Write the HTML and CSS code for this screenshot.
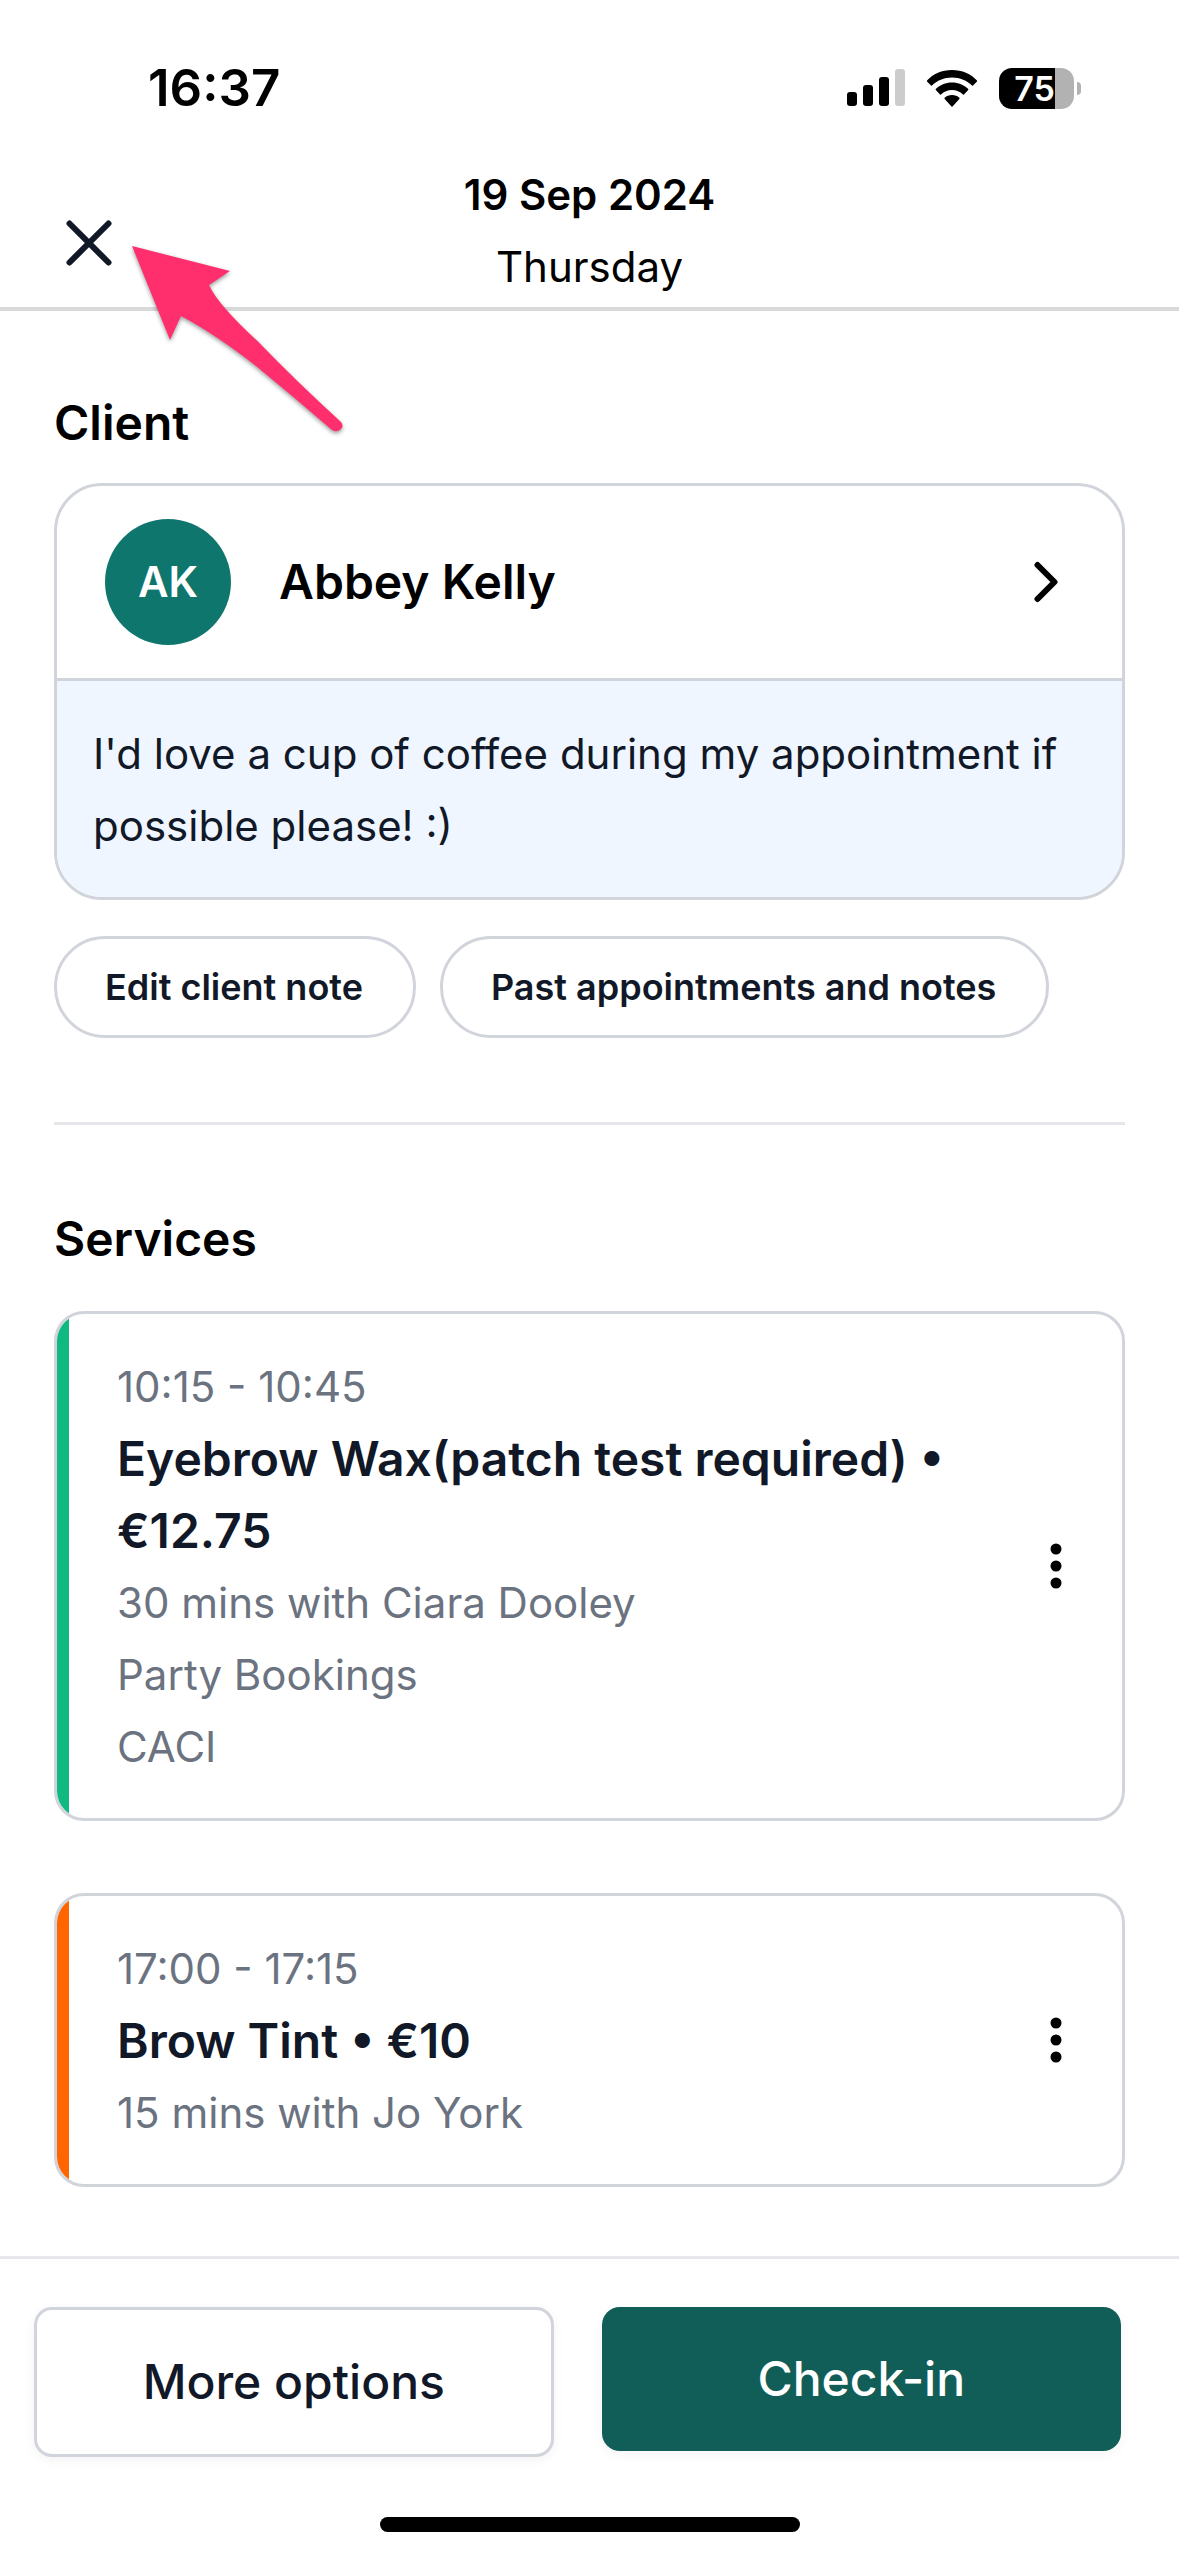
FILE: index.html
```html
<!DOCTYPE html>
<html lang="en">
  <head>
    <meta charset="utf-8" />
    <meta name="viewport" content="width=device-width, initial-scale=1.0" />
    <title>Appointment</title>
    <link rel="stylesheet" href="styles.css">
  </head>
  <body>
    <div class="status">
      <span class="status-time">16:37</span>
      <div class="status-icons">
        <svg class="signal" width="58" height="38" viewBox="0 0 58 38">
          <rect x="0" y="23" width="10" height="14" rx="3" />
          <rect x="16" y="16" width="10" height="21" rx="3" />
          <rect x="32" y="8" width="10" height="29" rx="3" />
          <rect x="48" y="0" width="10" height="37" rx="3" fill="#ccc" />
        </svg>
        <svg class="wifi" width="50" height="37" viewBox="0 0 50 37">
          <path d="M25 0C35 0 44 4 50 10.500Q50.500 11 50 11.500L46 15.500Q45.500 16 45 15.500C40 10.500 33 7.500 25 7.500S10 10.500 5 15.500Q4.500 16 4 15.500L0 11.500Q-.5 11 0 10.500C6 4 15 0 25 0Z" />
          <path d="M25 12.500C31.500 12.500 37 15 41.200 19Q41.700 19.500 41.200 20L37 24.500Q36.500 25 36 24.500C33 21.500 29.500 20 25 20S17 21.500 14 24.500Q13.500 25 13 24.500L8.800 20Q8.300 19.500 8.800 19C13 15 18.500 12.500 25 12.500Z" />
          <path d="M25 25C28 25 30.500 26 32.300 27.700Q32.800 28.300 32.300 29L25.500 36.500Q25 37 24.500 36.500L17.700 29Q17.200 28.300 17.700 27.700C19.500 26 22 25 25 25Z" />
        </svg>
        <div class="battery"><span class="battery-level">75</span></div>
      </div>
    </div>

    <header class="topbar">
      <button class="close" type="button" aria-label="Close">
        <svg width="46" height="46" viewBox="0 0 46 46">
          <path d="M3.500 3.500L42.500 42.500M42.500 3.500L3.500 42.500" />
        </svg>
      </button>
      <div class="date">
        <strong>19 Sep 2024</strong>
        <span>Thursday</span>
      </div>
      <!-- arrow pointing at the close button -->
      <svg class="arrow" width="220" height="190" viewBox="0 0 220 190">
        <path d="M2 1L100 26L79 40Q88 60 128 96.500Q165 135 211 177Q214 181 211 184Q207 188 202 185Q165 153 126 121Q85 89 51 71L40 95Z" />
      </svg>
    </header>

    <main>
      <section class="client">
        <h2>Client</h2>
        <div class="client-card">
          <a class="client-row" href="#">
            <span class="avatar">AK</span>
            <span class="client-name">Abbey Kelly</span>
            <svg class="chevron" width="24" height="42" viewBox="0 0 24 42">
              <path d="M3.500 4L20.500 21L3.500 38" />
            </svg>
          </a>
          <p class="note">I'd love a cup of coffee during my appointment if possible please! :)</p>
        </div>
        <div class="client-actions">
          <button class="pill" type="button">Edit client note</button>
          <button class="pill" type="button">Past appointments and notes</button>
        </div>
      </section>

      <section class="services">
        <h2>Services</h2>
        <div class="service service-green">
          <div class="service-info">
            <p>10:15 - 10:45</p>
            <h3>Eyebrow Wax(patch test required) • €12.75</h3>
            <p>30 mins with Ciara Dooley</p>
            <p>Party Bookings</p>
            <p>CACI</p>
          </div>
          <button class="dots" type="button" aria-label="Service options">
            <svg width="12" height="46" viewBox="0 0 12 46">
              <circle cx="6" cy="6" r="5.500" /><circle cx="6" cy="23" r="5.500" /><circle cx="6" cy="40" r="5.500" />
            </svg>
          </button>
        </div>
        <div class="service service-orange">
          <div class="service-info">
            <p>17:00 - 17:15</p>
            <h3>Brow Tint • €10</h3>
            <p>15 mins with Jo York</p>
          </div>
          <button class="dots" type="button" aria-label="Service options">
            <svg width="12" height="46" viewBox="0 0 12 46">
              <circle cx="6" cy="6" r="5.500" /><circle cx="6" cy="23" r="5.500" /><circle cx="6" cy="40" r="5.500" />
            </svg>
          </button>
        </div>
      </section>
    </main>

    <footer class="bottom">
      <button class="btn btn-light" type="button">More options</button>
      <button class="btn btn-dark" type="button">Check-in</button>
    </footer>
    <div class="home-bar"></div>
  </body>
</html>
```
FILE: styles.css
```css
* {
  box-sizing: border-box;
}
body {
  margin: 0;
  background: #fff;
  color: #000;
  font-family: Inter, "Liberation Sans", sans-serif;
  font-size: 42px;
  line-height: 72px;
  font-optical-sizing: none;
}
h2,
h3,
p {
  margin: 0;
}
h2,
h3 {
  font-size: 48px;
  font-weight: 600;
}
button {
  font-family: inherit;
  color: #111827;
  background: none;
  border: 0;
  padding: 0;
}
svg {
  display: block;
}

/* status bar */
.status {
  display: flex;
  justify-content: space-between;
  align-items: center;
  padding: 52px 105px 35px 148px;
}
.status-time {
  font-size: 51px;
  font-weight: 600;
}
.status-icons {
  display: flex;
  align-items: center;
  gap: 22px;
}
.battery {
  position: relative;
  width: 75px;
  height: 41px;
  border-radius: 13px;
  background: linear-gradient(to right, #000 75%, #b2b2b2 75%);
}
.battery::after {
  content: "";
  position: absolute;
  left: 78px;
  top: 14px;
  width: 4px;
  height: 13px;
  border-radius: 0 4px 4px 0;
  background: #b2b2b2;
}
.battery-level {
  display: block;
  width: 56px;
  font-size: 34px;
  font-weight: 600;
  line-height: 41px;
  text-align: right;
  color: #fff;
}

/* date header */
.topbar {
  position: relative;
  display: grid;
  grid-template-columns: 1fr auto 1fr;
  align-items: center;
  padding: 0 66px 4px;
  border-bottom: 4px solid #d9d9d9;
}
.close {
  justify-self: start;
  padding-top: 24px;
}
.close path {
  fill: none;
  stroke: #111827;
  stroke-width: 6;
  stroke-linecap: round;
}
.date {
  display: flex;
  flex-direction: column;
  align-items: center;
}
.date strong {
  font-weight: 600;
}
.arrow {
  position: absolute;
  left: 130px;
  top: 86px;
  fill: #ff2f6e;
  filter: drop-shadow(0 2px 2px rgba(0, 0, 0, 0.4));
}

main {
  padding: 76px 54px 69px;
}

/* client */
.client {
  padding-bottom: 84px;
  border-bottom: 3px solid #e5e7eb;
}
.client-card {
  margin-top: 24px;
  border: 3px solid #d1d5db;
  border-radius: 48px;
  overflow: hidden;
}
.client-row {
  display: flex;
  align-items: center;
  gap: 48px;
  padding: 33px 64px 33px 48px;
  color: #000;
  text-decoration: none;
}
.avatar {
  width: 126px;
  border-radius: 50%;
  background: #0f766e;
  color: #fff;
  font-weight: 600;
  line-height: 126px;
  text-align: center;
}
.client-name {
  flex: 1;
  font-size: 48px;
  font-weight: 600;
}
.chevron path {
  fill: none;
  stroke: #000;
  stroke-width: 6;
  stroke-linecap: round;
  stroke-linejoin: round;
}
.note {
  padding: 37px 36px 35px;
  border-top: 3px solid #d1d5db;
  background: #eff6ff;
  color: #111827;
}
.client-actions {
  display: flex;
  flex-wrap: wrap;
  gap: 24px;
  margin-top: 36px;
}
.pill {
  padding: 18px 50px 18px 48px;
  border: 3px solid #d1d5db;
  border-radius: 52px;
  font-size: 36px;
  font-weight: 600;
  line-height: 60px;
}

/* services */
.services {
  display: flex;
  flex-direction: column;
  padding-top: 78px;
}
.service {
  display: flex;
  align-items: center;
  margin-top: 36px;
  border: 3px solid #d1d5db;
  border-radius: 30px;
  overflow: hidden;
}
.service + .service {
  margin-top: 72px;
}
.service-info {
  flex: 1;
  padding: 37px 0 35px 48px;
  border-left: 12px solid;
  color: #6b7280;
}
.service-info h3 {
  color: #111827;
}
.service-green .service-info {
  border-left-color: #10b981;
}
.service-orange .service-info {
  border-left-color: #ff6600;
}
.dots {
  padding: 12px 60px;
}

/* bottom buttons */
.bottom {
  display: grid;
  grid-template-columns: 1fr 1fr;
  align-items: start;
  gap: 48px;
  padding: 48px 58px 60px 34px;
  border-top: 3px solid #e5e7eb;
}
.btn {
  padding: 36px;
  border-radius: 18px;
  font-size: 48px;
  font-weight: 500;
  line-height: 72px;
  box-shadow: 0 3px 12px rgba(0, 0, 0, 0.05);
}
.btn-light {
  border: 3px solid #d1d5db;
  background: #fff;
}
.btn-dark {
  background: #115e59;
  color: #fff;
}

.home-bar {
  width: 420px;
  height: 15px;
  margin: 0 auto;
  border-radius: 8px;
  background: #000;
}
```
